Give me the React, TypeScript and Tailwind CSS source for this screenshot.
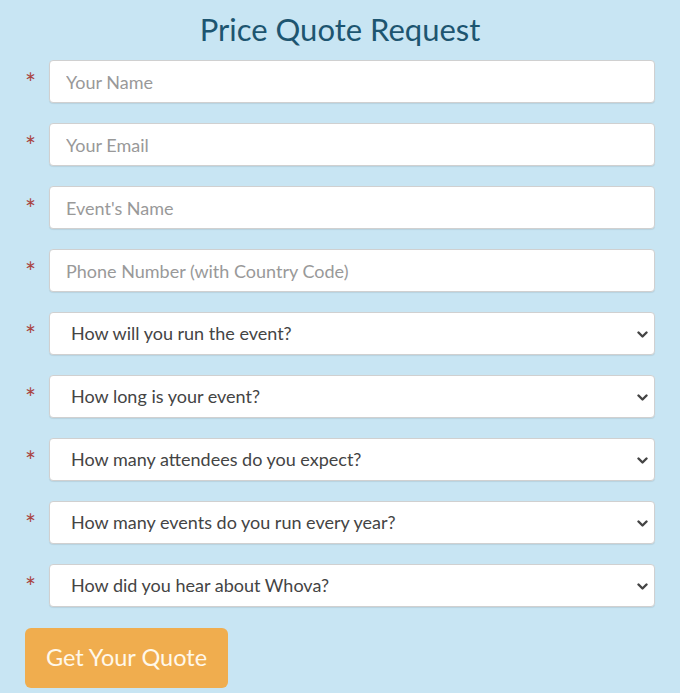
import { useState } from "react";

const textFields = ["Your Name", "Your Email", "Event's Name", "Phone Number (with Country Code)"];

const selectFields = [
  "How will you run the event?",
  "How long is your event?",
  "How many attendees do you expect?",
  "How many events do you run every year?",
  "How did you hear about Whova?",
];

function Required() {
  return (
    <span className="w-[24px] shrink-0 pt-[10px] text-[26px] leading-none text-[#a94442]">*</span>
  );
}

function Chevron() {
  return (
    <svg width="11" height="8" viewBox="0 0 11 8" className="pointer-events-none absolute right-[7px] top-[19px]">
      <path d="M1.5 1.5 L5.5 5.5 L9.5 1.5" fill="none" stroke="#444" strokeWidth="2.4" strokeLinecap="round" strokeLinejoin="round" />
    </svg>
  );
}

export default function App() {
  const [values, setValues] = useState<Record<string, string>>({});

  return (
    <main className="min-h-[693px] w-[680px] bg-[#c8e5f3] px-[25px] font-['Lato',sans-serif]">
      <h1 className="pt-[10px] pb-[12px] text-center text-[31px] leading-[38px] text-[#1d5570]">Price Quote Request</h1>
      <form className="flex flex-col gap-[20px]" onSubmit={(e) => e.preventDefault()}>
        {textFields.map((f) => (
          <div key={f} className="flex">
            <Required />
            <input
              placeholder={f}
              value={values[f] ?? ""}
              onChange={(e) => setValues({ ...values, [f]: e.target.value })}
              className="h-[43px] flex-1 rounded-[4px] border border-[#d0d0d0] bg-white px-[16px] text-[18px] text-[#444] shadow-[0_1px_1px_rgba(0,0,0,0.08)] outline-none placeholder:text-[#999]"
            />
          </div>
        ))}
        {selectFields.map((f) => (
          <div key={f} className="flex">
            <Required />
            <div className="relative flex-1">
              <select
                value={values[f] ?? ""}
                onChange={(e) => setValues({ ...values, [f]: e.target.value })}
                className="h-[43px] w-full appearance-none rounded-[4px] border border-[#d0d0d0] bg-white pl-[21px] text-[18px] text-[#444] shadow-[0_1px_1px_rgba(0,0,0,0.08)] outline-none"
              >
                <option value="">{f}</option>
              </select>
              <Chevron />
            </div>
          </div>
        ))}
        <div className="pt-[1px]">
          <button
            type="submit"
            className="h-[60px] w-[203px] rounded-[6px] bg-[#f0ad4e] text-[23.5px] text-[#fff8ea]"
          >
            Get Your Quote
          </button>
        </div>
      </form>
    </main>
  );
}
